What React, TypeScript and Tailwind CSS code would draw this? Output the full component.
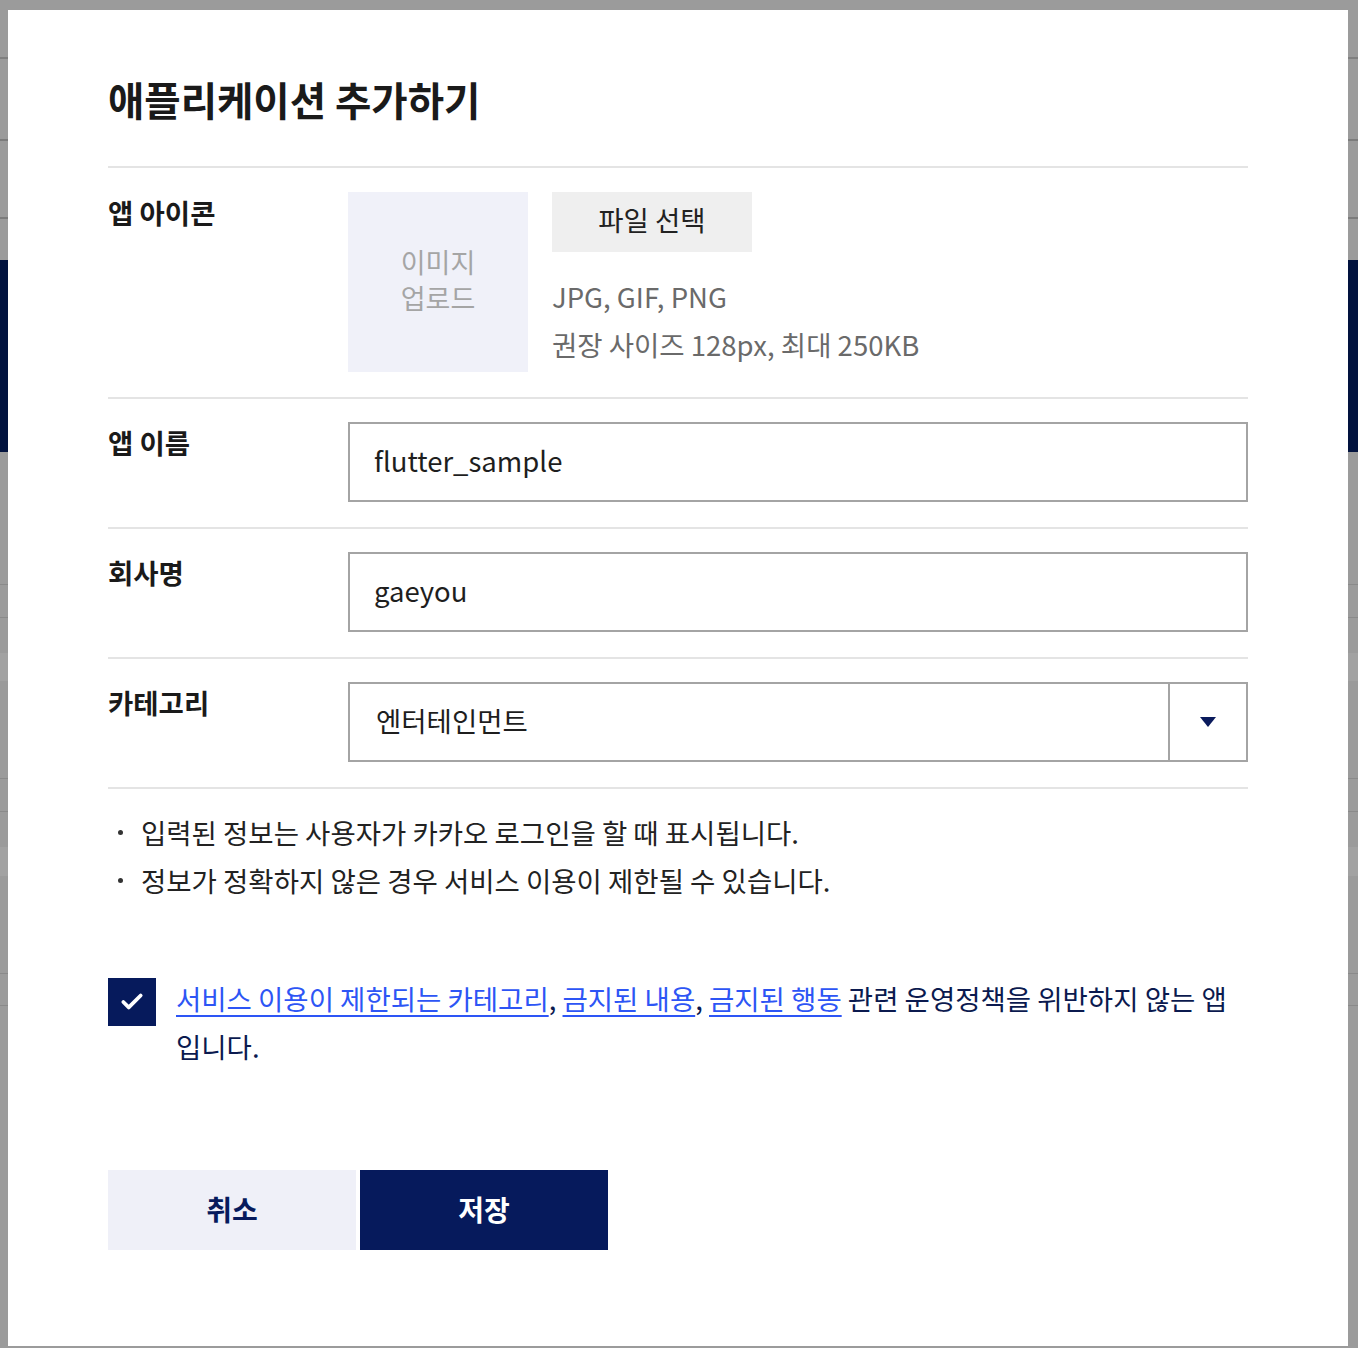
import { Check } from "lucide-react";

function FormRow({ label, first, children }: { label: string; first?: boolean; children: React.ReactNode }) {
  return (
    <div className={`flex border-t-2 border-[#e4e4e4] pb-[25px] ${first ? "pt-[24px]" : "pt-[23px]"}`}>
      <div className="w-[240px] shrink-0 text-[27.5px] font-bold leading-[41px] text-[#1a1a1a]">{label}</div>
      <div className="flex-1">{children}</div>
    </div>
  );
}

function TextField({ value }: { value: string }) {
  return (
    <div className="flex h-[80px] items-center border-2 border-[#a4a4a4] px-[24px] pb-[2px] text-[27.5px] text-[#1e1e1e]">
      {value}
    </div>
  );
}

// 뒤에 깔린 페이지 (오버레이에 가려진 부분)
function BackgroundPage() {
  return (
    <div className="w-full">
      <div className="h-[57px]" />
      <div className="h-[2px] bg-[#808080]" />
      <div className="h-[80px]" />
      <div className="h-[2px] bg-[#7c7c7c]" />
      <div className="h-[76px]" />
      <div className="h-[2px] bg-[#7c7c7c]" />
      <div className="h-[41px]" />
      <div className="h-[192px] bg-[#02133f]" />
      <div className="h-[132px]" />
      <div className="h-[1px] bg-[#8a8a8a]" />
      <div className="h-[32px]" />
      <div className="h-[1px] bg-[#8a8a8a]" />
      <div className="h-[35px]" />
      <div className="h-[28px] bg-[#a2a2a2]" />
      <div className="h-[97px]" />
      <div className="h-[1px] bg-[#8a8a8a]" />
      <div className="h-[32px]" />
      <div className="h-[1px] bg-[#8a8a8a]" />
      <div className="h-[35px]" />
      <div className="h-[29px] bg-[#a2a2a2]" />
      <div className="h-[97px]" />
      <div className="h-[1px] bg-[#8a8a8a]" />
      <div className="h-[31px]" />
      <div className="h-[1px] bg-[#8a8a8a]" />
    </div>
  );
}

export default function App() {
  return (
    <div className="relative h-[1348px] w-full overflow-hidden bg-[#9b9b9b] font-['Noto_Sans_CJK_KR','Noto_Sans',sans-serif]">
      <BackgroundPage />

      {/* 모달 */}
      <div className="absolute left-[8px] top-[10px] h-[1336px] w-[1340px] bg-white px-[100px] pt-[61px]">
        <h1 className="text-[39.5px] font-bold leading-[56px] text-[#1a1a1a]">애플리케이션 추가하기</h1>

        <div className="mt-[39px]">
          <FormRow label="앱 아이콘" first>
            <div className="flex gap-[24px]">
              <div className="flex h-[180px] w-[180px] items-center justify-center bg-[#f0f1f9] pb-[5px] text-center text-[27px] leading-[36px] text-[#a5a5a5]">
                이미지
                <br />
                업로드
              </div>
              <div className="flex flex-col">
                <button className="flex h-[60px] w-[200px] items-center justify-center bg-[#efefef] pb-[5px] text-[27.5px] text-[#222]">
                  파일 선택
                </button>
                <div className="mt-[20px] text-[27.5px] leading-[48px] text-[#6a6a6a]">
                  <div>JPG, GIF, PNG</div>
                  <div>권장 사이즈 128px, 최대 250KB</div>
                </div>
              </div>
            </div>
          </FormRow>

          <FormRow label="앱 이름">
            <TextField value="flutter_sample" />
          </FormRow>

          <FormRow label="회사명">
            <TextField value="gaeyou" />
          </FormRow>

          <FormRow label="카테고리">
            <div className="flex h-[80px] border-2 border-[#a4a4a4]">
              <div className="flex flex-1 items-center px-[26px] pb-[3px] text-[27.5px] text-[#1e1e1e]">엔터테인먼트</div>
              <div className="flex w-[78px] items-center justify-center border-l-2 border-[#a4a4a4]">
                <svg width="16" height="10" viewBox="0 0 16 10">
                  <path d="M0 0H16L8 10Z" fill="#0a1a5c" />
                </svg>
              </div>
            </div>
          </FormRow>

          {/* 안내 문구 */}
          <div className="border-t-2 border-[#e4e4e4] pt-[19px]">
            <ul className="text-[27.5px] leading-[48px] text-[#222]">
              <li className="flex items-center">
                <span className="ml-[10px] h-[5px] w-[5px] rounded-full bg-[#333]" />
                <span className="ml-[18px]">입력된 정보는 사용자가 카카오 로그인을 할 때 표시됩니다.</span>
              </li>
              <li className="flex items-center">
                <span className="ml-[10px] h-[5px] w-[5px] rounded-full bg-[#333]" />
                <span className="ml-[18px]">정보가 정확하지 않은 경우 서비스 이용이 제한될 수 있습니다.</span>
              </li>
            </ul>
          </div>

          {/* 동의 체크 */}
          <div className="mt-[70px] flex items-start">
            <div className="mt-[4px] flex h-[48px] w-[48px] shrink-0 items-center justify-center bg-[#061a5c]">
              <Check className="h-[26px] w-[26px] text-white" strokeWidth={3.5} />
            </div>
            <p className="ml-[20px] text-[27.5px] leading-[48px] text-[#0b1a4f]">
              <span className="whitespace-nowrap">
                <a className="text-[#2d55f5] underline underline-offset-[5px]">서비스 이용이 제한되는 카테고리</a>,{" "}
                <a className="text-[#2d55f5] underline underline-offset-[5px]">금지된 내용</a>,{" "}
                <a className="text-[#2d55f5] underline underline-offset-[5px]">금지된 행동</a> 관련 운영정책을 위반하지
                않는 앱
              </span>
              <br />
              입니다.
            </p>
          </div>

          {/* 버튼 */}
          <div className="mt-[100px] flex gap-[4px]">
            <button className="h-[80px] w-[248px] bg-[#eff0f8] pb-[2px] text-[28px] font-bold text-[#061a5c]">취소</button>
            <button className="h-[80px] w-[248px] bg-[#061a5c] pb-[2px] text-[28px] font-bold text-white">저장</button>
          </div>
        </div>
      </div>
    </div>
  );
}
